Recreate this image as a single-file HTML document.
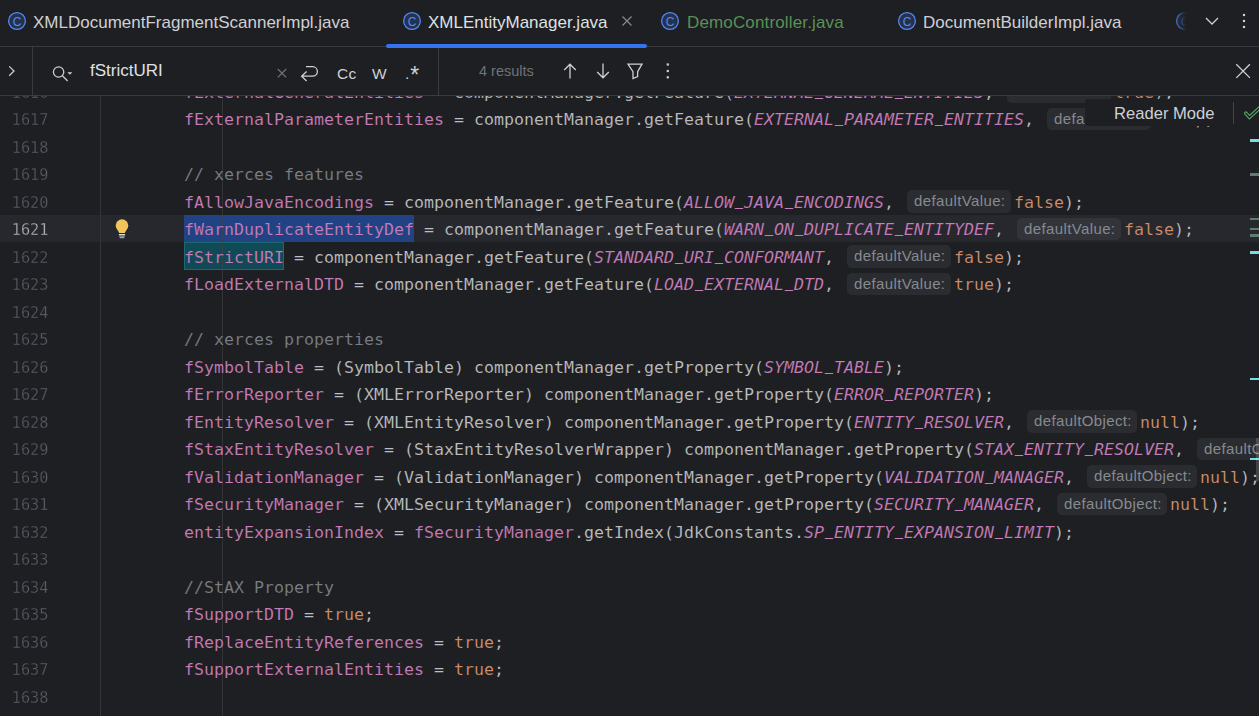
<!DOCTYPE html>
<html lang="en"><head><meta charset="utf-8"><title>XMLEntityManager.java</title>
<style>
*{box-sizing:border-box;margin:0;padding:0}
html,body{width:1259px;height:716px;overflow:hidden;background:#1e1f22}
body{position:relative;font-family:"Liberation Sans",sans-serif;color:#bcbec4}
#editor{position:absolute;left:0;top:0;width:1259px;height:716px;overflow:hidden;background:#1e1f22}
.curline{position:absolute;left:0;top:215px;width:1259px;height:27px;background:#26282e}
.gutline{position:absolute;left:100px;top:96px;width:1px;height:620px;background:#313438}
.indent{position:absolute;left:222px;top:96px;width:1px;height:620px;background:rgba(64,67,72,.6)}
.ln{-webkit-text-stroke:.3px #1e1f22;position:absolute;left:0;width:48.5px;height:27.5px;line-height:27.5px;padding-top:1px;text-align:right;transform:scaleX(.92);transform-origin:100% 50%;font-family:"DejaVu Sans Mono","Liberation Mono",monospace;font-size:16.61px;color:#575c66;white-space:pre}
.ln.cur{color:#b4b6bd;-webkit-text-stroke-color:#26282e}
.code{-webkit-text-stroke:.12px #1e1f22;position:absolute;left:184px;height:27.5px;line-height:27.5px;padding-top:1px;white-space:pre;font-family:"DejaVu Sans Mono","Liberation Mono",monospace;font-size:16.61px;color:#bcbec4}
.f{color:#c77dbb}
.c{color:#c77dbb;font-style:italic}
.k{color:#cf8e6d}
.m{color:#7a7e85}
.selbox{position:absolute;left:184px;top:215px;width:230px;height:27px;background:#214283}
.hitbox{position:absolute;left:184px;top:242px;width:100px;height:28px;background:#114957;border:1px solid #1a6a6e}
.h{display:inline-block;vertical-align:top;height:26.5px;padding:1.5px 3px 0 3px;width:110px}
.h.o{width:116px}
.hi{display:block;height:22.5px;line-height:22px;border-radius:5px;background:rgba(255,255,255,.058);color:#868a91;font-family:"Liberation Sans",sans-serif;font-size:15px;letter-spacing:.38px;padding:0 0 0 7px;font-style:normal;overflow:hidden}
/* top bars */
#tabs{position:absolute;left:0;top:0;width:1259px;height:47px;background:#1e1f22;border-bottom:1px solid #393b40}
#search{position:absolute;left:0;top:47px;width:1259px;height:49px;background:#1e1f22;border-bottom:1px solid #393b40}
.ico{position:absolute;display:block;overflow:visible}
.tab{position:absolute;top:12px;height:22px;line-height:22px;font-size:17px;color:#ced0d6;white-space:pre}
.tab.act{color:#dfe1e5}
.tab.grn{color:#5a9156;letter-spacing:.15px}
.fadeico{position:absolute;left:1175px;top:11px;width:12px;height:20px;overflow:hidden;-webkit-mask-image:linear-gradient(to right,rgba(0,0,0,.85) 0,rgba(0,0,0,.6) 40%,transparent 95%);mask-image:linear-gradient(to right,rgba(0,0,0,.85) 0,rgba(0,0,0,.6) 40%,transparent 95%)}
.underline{position:absolute;left:386px;top:44px;width:261px;height:4px;border-radius:2px;background:#3574f0;z-index:3}
.vsep{position:absolute;top:0;width:1px;height:48px;background:#393b40}
.q{position:absolute;left:90px;top:13px;height:22px;line-height:22px;font-size:17px;color:#dfe1e5;white-space:pre}
.opt{position:absolute;top:16px;height:22px;line-height:22px;font-size:15.5px;letter-spacing:.4px;color:#ced0d6;white-space:pre}
.res{position:absolute;left:479px;top:13px;height:22px;line-height:22px;font-size:14.5px;color:#6f737a;white-space:pre}
.reader{position:absolute;left:1084.5px;top:98.5px;width:180px;height:27px;border-radius:4px;background:#1e1f22}
.rm{position:absolute;left:29.5px;top:4px;height:22px;line-height:22px;font-size:16.6px;color:#ced0d6;white-space:pre}
.rsep{position:absolute;left:148.5px;top:3.5px;width:1px;height:22px;background:#43454a}
.mk{position:absolute;left:1250px;width:9px;height:2.5px}
.mk.b{background:#6fdfe0}
.mk.d{background:#5f7d6d}
.thumb{position:absolute;left:1256px;top:437.5px;width:3px;height:43.5px;background:rgba(255,255,255,.16)}
.opt .st{font-size:23px;position:relative;top:4.2px;left:.5px;line-height:10px}
.code.cl{-webkit-text-stroke-color:#26282e}
.ss{-webkit-text-stroke-color:#214283}
.hs{-webkit-text-stroke-color:#114957}
.hi{-webkit-text-stroke:0}
.u{display:inline-block;position:relative;top:-3px;transform:scaleX(.8);-webkit-text-stroke:.55px #c77dbb;line-height:10px}
</style></head>
<body>
<div id="editor">
<div class="curline"></div>
<div class="selbox"></div>
<div class="hitbox"></div>
<div class="gutline"></div>
<div class="indent"></div>
<div class="ln" style="top:77.5px">1616</div><div class="code" style="top:77.5px"><span class="f">fExternalGeneralEntities</span> = componentManager.getFeature(<span class="c">EXTERNAL<span class="u">_</span>GENERAL<span class="u">_</span>ENTITIES</span>, <span class="h"><span class="hi">defaultValue:</span></span><span class="k">true</span>);</div>
<div class="ln" style="top:105.0px">1617</div><div class="code" style="top:105.0px"><span class="f">fExternalParameterEntities</span> = componentManager.getFeature(<span class="c">EXTERNAL<span class="u">_</span>PARAMETER<span class="u">_</span>ENTITIES</span>, <span class="h"><span class="hi">defaultValue:</span></span><span class="k">true</span>);</div>
<div class="ln" style="top:132.5px">1618</div>
<div class="ln" style="top:160.0px">1619</div><div class="code" style="top:160.0px"><span class="m">// xerces features</span></div>
<div class="ln" style="top:187.5px">1620</div><div class="code" style="top:187.5px"><span class="f">fAllowJavaEncodings</span> = componentManager.getFeature(<span class="c">ALLOW<span class="u">_</span>JAVA<span class="u">_</span>ENCODINGS</span>, <span class="h"><span class="hi">defaultValue:</span></span><span class="k">false</span>);</div>
<div class="ln cur" style="top:215.0px">1621</div><div class="code cl" style="top:215.0px"><span class="f ss">fWarnDuplicateEntityDef</span> = componentManager.getFeature(<span class="c">WARN<span class="u">_</span>ON<span class="u">_</span>DUPLICATE<span class="u">_</span>ENTITYDEF</span>, <span class="h"><span class="hi">defaultValue:</span></span><span class="k">false</span>);</div>
<div class="ln" style="top:242.5px">1622</div><div class="code" style="top:242.5px"><span class="f hs">fStrictURI</span> = componentManager.getFeature(<span class="c">STANDARD<span class="u">_</span>URI<span class="u">_</span>CONFORMANT</span>, <span class="h"><span class="hi">defaultValue:</span></span><span class="k">false</span>);</div>
<div class="ln" style="top:270.0px">1623</div><div class="code" style="top:270.0px"><span class="f">fLoadExternalDTD</span> = componentManager.getFeature(<span class="c">LOAD<span class="u">_</span>EXTERNAL<span class="u">_</span>DTD</span>, <span class="h"><span class="hi">defaultValue:</span></span><span class="k">true</span>);</div>
<div class="ln" style="top:297.5px">1624</div>
<div class="ln" style="top:325.0px">1625</div><div class="code" style="top:325.0px"><span class="m">// xerces properties</span></div>
<div class="ln" style="top:352.5px">1626</div><div class="code" style="top:352.5px"><span class="f">fSymbolTable</span> = (SymbolTable) componentManager.getProperty(<span class="c">SYMBOL<span class="u">_</span>TABLE</span>);</div>
<div class="ln" style="top:380.0px">1627</div><div class="code" style="top:380.0px"><span class="f">fErrorReporter</span> = (XMLErrorReporter) componentManager.getProperty(<span class="c">ERROR<span class="u">_</span>REPORTER</span>);</div>
<div class="ln" style="top:407.5px">1628</div><div class="code" style="top:407.5px"><span class="f">fEntityResolver</span> = (XMLEntityResolver) componentManager.getProperty(<span class="c">ENTITY<span class="u">_</span>RESOLVER</span>, <span class="h o"><span class="hi">defaultObject:</span></span><span class="k">null</span>);</div>
<div class="ln" style="top:435.0px">1629</div><div class="code" style="top:435.0px"><span class="f">fStaxEntityResolver</span> = (StaxEntityResolverWrapper) componentManager.getProperty(<span class="c">STAX<span class="u">_</span>ENTITY<span class="u">_</span>RESOLVER</span>, <span class="h o"><span class="hi">defaultObject:</span></span><span class="k">null</span>);</div>
<div class="ln" style="top:462.5px">1630</div><div class="code" style="top:462.5px"><span class="f">fValidationManager</span> = (ValidationManager) componentManager.getProperty(<span class="c">VALIDATION<span class="u">_</span>MANAGER</span>, <span class="h o"><span class="hi">defaultObject:</span></span><span class="k">null</span>);</div>
<div class="ln" style="top:490.0px">1631</div><div class="code" style="top:490.0px"><span class="f">fSecurityManager</span> = (XMLSecurityManager) componentManager.getProperty(<span class="c">SECURITY<span class="u">_</span>MANAGER</span>, <span class="h o"><span class="hi">defaultObject:</span></span><span class="k">null</span>);</div>
<div class="ln" style="top:517.5px">1632</div><div class="code" style="top:517.5px"><span class="f">entityExpansionIndex</span> = <span class="f">fSecurityManager</span>.getIndex(JdkConstants.<span class="c">SP<span class="u">_</span>ENTITY<span class="u">_</span>EXPANSION<span class="u">_</span>LIMIT</span>);</div>
<div class="ln" style="top:545.0px">1633</div>
<div class="ln" style="top:572.5px">1634</div><div class="code" style="top:572.5px"><span class="m">//StAX Property</span></div>
<div class="ln" style="top:600.0px">1635</div><div class="code" style="top:600.0px"><span class="f">fSupportDTD</span> = <span class="k">true</span>;</div>
<div class="ln" style="top:627.5px">1636</div><div class="code" style="top:627.5px"><span class="f">fReplaceEntityReferences</span> = <span class="k">true</span>;</div>
<div class="ln" style="top:655.0px">1637</div><div class="code" style="top:655.0px"><span class="f">fSupportExternalEntities</span> = <span class="k">true</span>;</div>
<div class="ln" style="top:682.5px">1638</div>
<div class="reader"><span class="rm">Reader Mode</span><div class="rsep"></div>
<svg class="ico" style="left:155.5px;top:1.5px" width="20" height="24" viewBox="0 0 20 24"><path d="M5.9 13.2 L9.5 17.2 L20 7.7" stroke="#5aa862" stroke-width="3.6" stroke-linecap="round" stroke-linejoin="miter" fill="none"/><path d="M5.9 13.2 L9.5 17.2 L20 7.7" stroke="#1e1f22" stroke-width="1.5" stroke-linecap="round" stroke-linejoin="miter" fill="none"/></svg></div>
<div class="mk b" style="top:139px"></div>
<div class="mk d" style="top:173px"></div>
<div class="mk d" style="top:217.5px"></div>
<div class="mk d" style="top:227.5px"></div>
<div class="mk d" style="top:234px"></div>
<div class="mk b" style="top:251px"></div>
<div class="mk b" style="top:377.5px"></div>
<div class="mk b" style="top:458px;height:2px"></div>
<div class="thumb"></div>
<svg class="ico bulb" style="left:114px;top:219px" width="16" height="20" viewBox="0 0 16 20"><circle cx="8" cy="6.6" r="6.3" fill="#f2c55c"/><path d="M3.6 11 H12.4 L10.8 14 H5.2 Z" fill="#f2c55c"/><rect x="4.9" y="15" width="6.2" height="1.5" fill="#d5d7dc"/><path d="M5.3 17.2 H10.7 L10.2 19.3 H5.8 Z" fill="#a0a2a9"/></svg>
</div>
<div id="tabs">
  <svg class="ico" style="left:7px;top:11px" width="20" height="20" viewBox="0 0 20 20"><circle cx="10" cy="10" r="8.4" fill="#25324d" stroke="#548af7" stroke-width="1.25"/><text x="10" y="14.5" text-anchor="middle" font-family="Liberation Sans, sans-serif" font-size="12" fill="#548af7">C</text></svg>
  <span class="tab" style="left:33px">XMLDocumentFragmentScannerImpl.java</span>
  <svg class="ico" style="left:402px;top:11px" width="20" height="20" viewBox="0 0 20 20"><circle cx="10" cy="10" r="8.4" fill="#25324d" stroke="#548af7" stroke-width="1.25"/><text x="10" y="14.5" text-anchor="middle" font-family="Liberation Sans, sans-serif" font-size="12" fill="#548af7">C</text></svg>
  <span class="tab act" style="left:428px">XMLEntityManager.java</span>
  <svg class="ico" style="left:621px;top:15px" width="12" height="12" viewBox="0 0 12 12"><path d="M1.5 1.5 L10.5 10.5 M10.5 1.5 L1.5 10.5" stroke="#868a91" stroke-width="1.2" fill="none"/></svg>
  <svg class="ico" style="left:660px;top:11px" width="20" height="20" viewBox="0 0 20 20"><circle cx="10" cy="10" r="8.4" fill="#25324d" stroke="#548af7" stroke-width="1.25"/><text x="10" y="14.5" text-anchor="middle" font-family="Liberation Sans, sans-serif" font-size="12" fill="#548af7">C</text></svg>
  <span class="tab grn" style="left:687px">DemoController.java</span>
  <svg class="ico" style="left:897px;top:11px" width="20" height="20" viewBox="0 0 20 20"><circle cx="10" cy="10" r="8.4" fill="#25324d" stroke="#548af7" stroke-width="1.25"/><text x="10" y="14.5" text-anchor="middle" font-family="Liberation Sans, sans-serif" font-size="12" fill="#548af7">C</text></svg>
  <span class="tab" style="left:923px">DocumentBuilderImpl.java</span>
  <div class="fadeico"><svg width="20" height="20" viewBox="0 0 20 20"><circle cx="10" cy="10" r="8.4" fill="#25324d" stroke="#548af7" stroke-width="1.25"/><text x="10" y="14.5" text-anchor="middle" font-family="Liberation Sans, sans-serif" font-size="12" fill="#548af7">C</text></svg></div>
  <svg class="ico" style="left:1204px;top:15px" width="16" height="12" viewBox="0 0 16 12"><path d="M2 3 L8 9 L14 3" stroke="#ced0d6" stroke-width="1.3" fill="none"/></svg>
  <svg class="ico" style="left:1240px;top:11px" width="8" height="20" viewBox="0 0 8 20"><rect x="2.9" y="2.9" width="2.2" height="2.2" fill="#ced0d6"/><rect x="2.9" y="8.9" width="2.2" height="2.2" fill="#ced0d6"/><rect x="2.9" y="14.9" width="2.2" height="2.2" fill="#ced0d6"/></svg>
  <div class="underline"></div>
</div>
<div id="search">
  <svg class="ico" style="left:6px;top:17px" width="12" height="16" viewBox="0 0 12 16"><path d="M3.2 2.4 L8 7.05 L3.2 11.7" stroke="#ced0d6" stroke-width="1.25" fill="none"/></svg>
  <div class="vsep" style="left:32px"></div>
  <svg class="ico" style="left:50px;top:16px" width="26" height="20" viewBox="0 0 26 20"><circle cx="8.6" cy="9" r="5.2" stroke="#ced0d6" stroke-width="1.25" fill="none"/><path d="M12.4 12.8 L17.6 18" stroke="#ced0d6" stroke-width="1.25" fill="none"/><path d="M17.4 9.2 L22.4 9.2 L19.9 11.8 Z" fill="#ced0d6"/></svg>
  <span class="q">fStrictURI</span>
  <svg class="ico" style="left:276px;top:20px" width="12" height="12" viewBox="0 0 12 12"><path d="M1.8 2 L10.2 10.4 M10.2 2 L1.8 10.4" stroke="#6f737a" stroke-width="1.2" fill="none"/></svg>
  <svg class="ico" style="left:298px;top:16px" width="24" height="22" viewBox="0 0 24 22"><path d="M8 3.7 H14.6 A4.75 4.75 0 0 1 14.6 13.2 H4 M8.6 8.5 L3.6 13.2 L8.6 18" stroke="#ced0d6" stroke-width="1.3" fill="none"/></svg>
  <span class="opt" style="left:337px">Cc</span>
  <span class="opt" style="left:372px">W</span>
  <span class="opt" style="left:405px">.<span class="st">*</span></span>
  <div class="vsep" style="left:438px"></div>
  <span class="res">4 results</span>
  <svg class="ico" style="left:562px;top:15px" width="16" height="18" viewBox="0 0 16 18"><path d="M8 16.6 V2.2 M2.2 8 L8 2.2 L13.8 8" stroke="#ced0d6" stroke-width="1.3" fill="none"/></svg>
  <svg class="ico" style="left:595px;top:15px" width="16" height="18" viewBox="0 0 16 18"><path d="M8 1.6 V15.8 M2.2 10 L8 15.8 L13.8 10" stroke="#ced0d6" stroke-width="1.3" fill="none"/></svg>
  <svg class="ico" style="left:626px;top:15px" width="18" height="18" viewBox="0 0 18 18"><path d="M2 2.2 H16 L11.6 9.6 V14.6 L7 16.6 V9.6 Z" stroke="#ced0d6" stroke-width="1.3" fill="none" stroke-linejoin="miter"/></svg>
  <svg class="ico" style="left:664px;top:14px" width="8" height="20" viewBox="0 0 8 20"><rect x="2.7" y="2.4" width="2.2" height="2.2" fill="#ced0d6"/><rect x="2.7" y="8.9" width="2.2" height="2.2" fill="#ced0d6"/><rect x="2.7" y="15.2" width="2.2" height="2.2" fill="#ced0d6"/></svg>
  <svg class="ico" style="left:1235px;top:16px" width="16" height="16" viewBox="0 0 16 16"><path d="M1.3 1.3 L14.9 14.9 M14.9 1.3 L1.3 14.9" stroke="#ced0d6" stroke-width="1.3" fill="none"/></svg>
</div>
</body></html>
